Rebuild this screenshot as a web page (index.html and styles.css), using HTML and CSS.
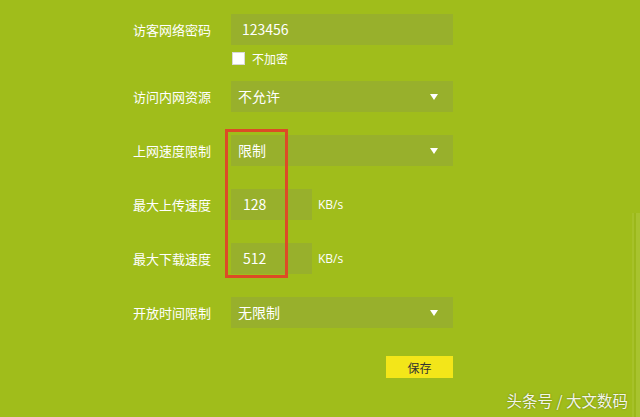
FILE: index.html
```html
<!DOCTYPE html>
<html lang="zh-CN">
<head>
    <meta charset="UTF-8">
    <meta name="viewport" content="width=device-width, initial-scale=1.0">
    <title>访客网络设置</title>
    <link rel="stylesheet" href="styles.css">
</head>
<body>
    <div class="panel">
        <div class="row">
            <label class="label">访客网络密码</label>
            <div class="field wide">123456</div>
        </div>
        <div class="check-line">
            <span class="check"></span>
            <span>不加密</span>
        </div>
        <div class="row">
            <label class="label">访问内网资源</label>
            <div class="field wide select">不允许<span class="arrow"></span></div>
        </div>
        <div class="row">
            <label class="label">上网速度限制</label>
            <div class="field wide select">限制<span class="arrow"></span></div>
        </div>
        <div class="row">
            <label class="label">最大上传速度</label>
            <div class="field short">128</div>
            <span class="unit">KB/s</span>
        </div>
        <div class="row">
            <label class="label">最大下载速度</label>
            <div class="field short">512</div>
            <span class="unit">KB/s</span>
        </div>
        <div class="row">
            <label class="label">开放时间限制</label>
            <div class="field wide select">无限制<span class="arrow"></span></div>
        </div>
        <div class="actions">
            <button class="save">保存</button>
        </div>

        <!-- 标注框 -->
        <div class="mark"></div>
    </div>

    <div class="scroll"></div>
    <div class="watermark">头条号 / 大文数码</div>
</body>
</html>
```

FILE: styles.css
```css
body {
    margin: 0;
    width: 640px;
    height: 417px;
    overflow: hidden;
    background-color: #a0bd1b;
    font-family: "Noto Sans CJK SC", "Noto Sans", sans-serif;
    color: #fff;
    position: relative;
}
.panel {
    position: relative;
    padding: 14px 0 0 133px;
    width: 320px;
}
.row {
    display: flex;
    align-items: center;
    height: 31px;
    margin-bottom: 23px;
}
.label {
    width: 98px;
    font-size: 13px;
    flex-shrink: 0;
}
.field {
    height: 31px;
    line-height: 31px;
    background-color: #98b02c;
    font-size: 14px;
    box-sizing: border-box;
    position: relative;
}
.wide {
    width: 222px;
    padding-left: 7px;
}
.short {
    width: 81px;
    padding-left: 12px;
}
.row:first-child {
    margin-bottom: 6px;
}
.row:first-child .field {
    padding-left: 11px;
}
.arrow {
    position: absolute;
    right: 15px;
    top: 13px;
    border-left: 4px solid transparent;
    border-right: 4px solid transparent;
    border-top: 6px solid #fff;
}
.unit {
    margin-left: 6px;
    font-size: 12px;
    font-family: "Open Sans", "Noto Sans", sans-serif;
}
.check-line {
    display: flex;
    align-items: center;
    margin-left: 99px;
    height: 14px;
    margin-bottom: 16px;
    font-size: 12px;
}
.check {
    width: 11px;
    height: 11px;
    background-color: #fff;
    border: 1px solid #d8d8d8;
    margin-right: 7px;
}
.actions {
    display: flex;
    justify-content: flex-end;
    padding-top: 5px;
}
.save {
    width: 67px;
    height: 22px;
    padding: 0;
    border: none;
    background-color: #f3e619;
    color: #333;
    font-size: 12px;
    font-family: "Noto Sans CJK SC", sans-serif;
}
.mark {
    position: absolute;
    left: 225px;
    top: 129px;
    width: 57px;
    height: 143px;
    border: 3px solid #dc4b26;
}
.scroll {
    position: absolute;
    right: 0;
    top: 213px;
    bottom: 0;
    width: 8px;
    background: linear-gradient(90deg, #a6c12a 0, #a6c12a 2px, #9bb81a 2px, #9bb81a 4px, #a8c32e 4px);
}
.watermark {
    position: absolute;
    right: 12px;
    bottom: 6px;
    font-size: 15.5px;
    color: rgba(255, 255, 255, 0.92);
    text-shadow: 0 0 2px rgba(0, 0, 0, 0.35);
}
```
